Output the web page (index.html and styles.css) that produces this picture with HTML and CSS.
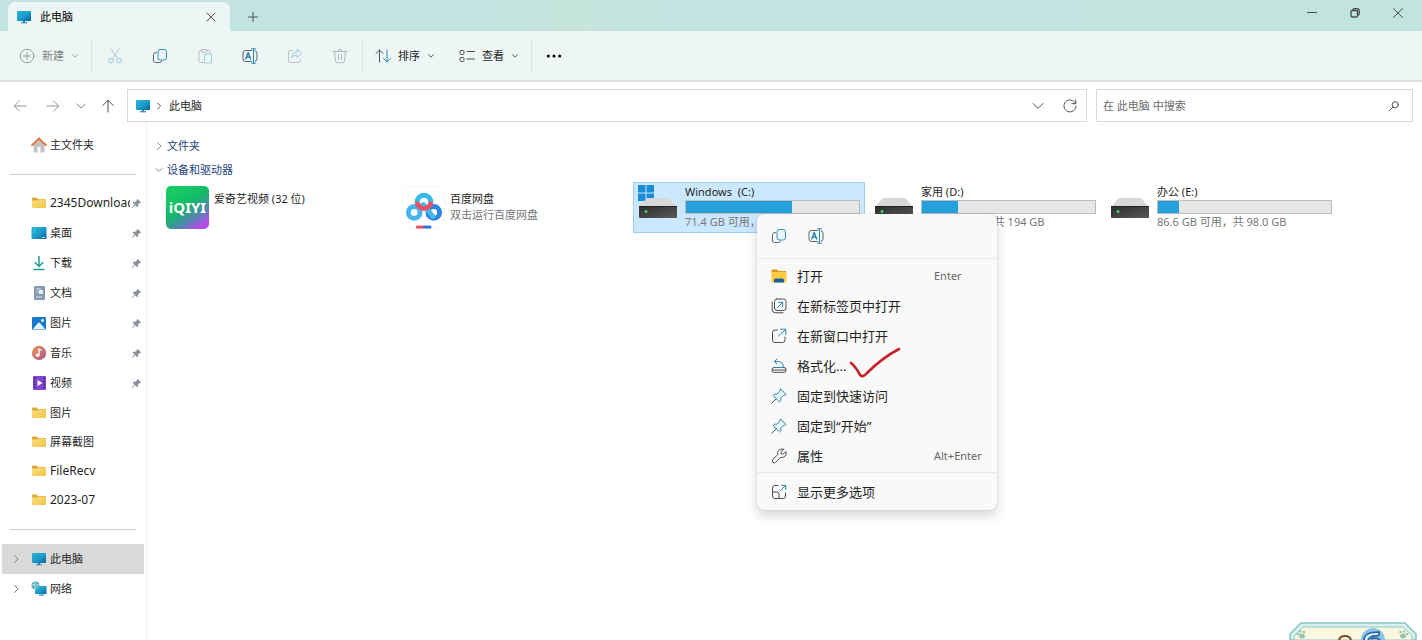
FILE: index.html
```html
<!DOCTYPE html>
<html lang="zh-CN">
<head>
  <meta charset="UTF-8" />
  <meta name="viewport" content="width=device-width, initial-scale=1.0"/>
  <title>此电脑</title>
  <link rel="stylesheet" href="styles.css">
</head>
<body>
  <!-- Shared icons -->
  <svg class="sprite" aria-hidden="true">
    <defs>
      <linearGradient id="screen" x1="0" y1="0" x2="1" y2="1"><stop offset="0" stop-color="#27b3cf"/><stop offset=".5" stop-color="#1c9fcd"/><stop offset="1" stop-color="#0f5ea0"/></linearGradient>
      <linearGradient id="gold" x1="0" y1="0" x2="1" y2="1"><stop offset="0" stop-color="#fbdf83"/><stop offset="1" stop-color="#f0c546"/></linearGradient>
      <linearGradient id="metal" x1="0" y1="0" x2="1" y2="1"><stop offset="0" stop-color="#2d2d2d"/><stop offset="1" stop-color="#5a5a5a"/></linearGradient>
      <linearGradient id="song" x1="0" y1="0" x2="1" y2="1"><stop offset="0" stop-color="#ee9a55"/><stop offset="1" stop-color="#b04f8c"/></linearGradient>
    </defs>
    <symbol id="pc" viewBox="0 0 16 16"><path d="M5 13h6v1.400H5z" fill="#4c9fbd"/><path d="M7 11.500h2v2H7z" fill="#2c7d9d"/><rect x="1" y="2" width="14" height="10" rx=".8" fill="url(#screen)"/></symbol>
    <symbol id="folder" viewBox="0 0 16 16"><path d="M1 3.500q0-1 1-1h3.500L7 4h7q1 0 1 1v2H1z" fill="#dfa93a"/><path d="M1 5.500h5.500L8 4.500h6q1 0 1 1V12q0 1-1 1H2q-1 0-1-1z" fill="url(#gold)"/></symbol>
    <symbol id="down" viewBox="0 0 10 10"><path d="M2 3.500l3 3 3-3"/></symbol>
    <symbol id="right" viewBox="0 0 10 10"><path d="M3.500 1.500L7 5 3.500 8.500"/></symbol>
    <symbol id="pin" viewBox="0 0 12 12"><path d="M7.300 1l3.700 3.700-.7.800-.8-.1-1.800 1.800.1 2-1 1-2.200-2.200L1.300 11l-.5-.5 3-3.300L1.700 5l1-1 2.100.2 1.700-1.700-.1-.8z" fill="#8b949e"/></symbol>
    <symbol id="copy" viewBox="0 0 16 16"><rect x="6" y="1.500" width="8.500" height="10.500" rx="2.200" stroke="#3c8db5" fill="#e8f6fc"/><path d="M4.500 4.500h-.7q-2 0-2.200 2l-.3 5.700q0 2.300 2.200 2.300h4q1.800 0 2.200-1.300" stroke="#58646c"/></symbol>
    <symbol id="rename" viewBox="0 0 16 16"><path d="M9.500 2.500h-6q-2.500 0-2.500 2.500v6q0 2.500 2.500 2.500h6M13 2.800q2 .3 2 2.200v6q0 1.900-2 2.200" stroke="#56636c"/><path d="M3.700 11l2.500-6.500L8.700 11M4.500 9h3.400" stroke="#277da8" stroke-width="1.300"/><path d="M9.500.8h4M11.500.8v14.400M9.500 15.200h4" stroke="#2b88b5"/></symbol>
    <symbol id="tack" viewBox="0 0 16 16"><path d="M9.800 1.300l4.900 4.900q-.2 1.200-1.200 1.200l-1.200.1-2.500 2.500.1 2.600-1.400 1.300-6.400-6.400 1.300-1.400 2.600.1 2.500-2.500.1-1.200q0-1 1.200-1.200z" stroke="#36809f" fill="#e5f7fc"/><path d="M5.200 10.800L.8 15.200" stroke="#40505a"/></symbol>
    <symbol id="disk" viewBox="0 0 40 22"><path d="M9 1h22l8 9H1z" fill="#d8d8da"/><rect x="1" y="9" width="38" height="12" rx=".8" fill="url(#metal)"/><path d="M1 9.500h38" stroke="#222"/><circle cx="8" cy="14.500" r="1.500" fill="#45d567"/></symbol>
  </svg>

  <header class="titlebar">
    <div class="tab">
      <svg class="icon"><use href="#pc"/></svg>
      <span class="tab-title">此电脑</span>
      <button class="tab-close" aria-label="关闭标签页"><svg class="line small" viewBox="0 0 10 10"><path d="M1 1l8 8M9 1L1 9"/></svg></button>
    </div>
    <button class="tab-add" aria-label="新标签页"><svg class="line small" viewBox="0 0 10 10"><path d="M5 .5v9M.5 5h9"/></svg></button>
    <div class="window-buttons">
      <button aria-label="最小化"><svg class="line small" viewBox="0 0 10 10"><path d="M.5 4.500h9"/></svg></button>
      <button aria-label="还原"><svg class="line small bold" viewBox="0 0 10 10"><rect x="1" y="2.500" width="6.500" height="6.500" rx="1.300"/><path d="M3 2.500V1.800Q3.300.8 4.300.8h3Q9.200.8 9.200 2.700v3q0 1.200-1.500 1.300"/></svg></button>
      <button aria-label="关闭"><svg class="line small" viewBox="0 0 10 10"><path d="M.5.5l9 9M9.500.5l-9 9"/></svg></button>
    </div>
  </header>

  <div class="toolbar">
    <button class="tool-text new" disabled>
      <svg class="line icon" viewBox="0 0 16 16"><circle cx="8" cy="8" r="6.800"/><path d="M8 4.800v6.400M4.800 8h6.400"/></svg>
      新建
      <svg class="line chev"><use href="#down"/></svg>
    </button>
    <div class="tool-group">
      <button class="tool" disabled aria-label="剪切"><svg class="line icon" viewBox="0 0 16 16"><path d="M4 1l6.500 9.800M12 1L5.500 10.800" stroke="#8d999e"/><circle cx="4" cy="12.500" r="2.400" stroke="#5baad0"/><circle cx="12" cy="12.500" r="2.400" stroke="#5baad0"/></svg></button>
      <button class="tool" aria-label="复制"><svg class="line icon"><use href="#copy"/></svg></button>
      <button class="tool" disabled aria-label="粘贴"><svg class="line icon" viewBox="0 0 16 16"><path d="M5 2.500H3q-1 0-1 1v10q0 1 1 1h4M10 2.500h2q1 0 1 1V5M5 1.500h5V4H5z" stroke="#8d999e"/><rect x="7.500" y="6" width="7" height="9" rx="1" stroke="#5baad0"/></svg></button>
      <button class="tool" aria-label="重命名"><svg class="line icon"><use href="#rename"/></svg></button>
      <button class="tool" disabled aria-label="共享"><svg class="line icon" viewBox="0 0 16 16"><path d="M6 2.500H4Q1.500 2.500 1.500 5v7q0 2.500 2.500 2.500h7q2.500 0 2.500-2.500v-1" stroke="#8d999e"/><path d="M10 1.500l5 4-5 4V7.300q-3.500-.3-5.500 2.800.3-5.600 5.500-6.300z" stroke="#5baad0" fill="#dff0f8"/></svg></button>
      <button class="tool" disabled aria-label="删除"><svg class="line icon" viewBox="0 0 16 16"><path d="M1 3.500h14M6 3.200q0-2 2-2t2 2M2.500 3.500l1 9.500q.2 1.800 1.800 1.800h5.400q1.600 0 1.800-1.800l1-9.500M6.500 6.500v5M9.500 6.500v5" stroke="#7d878b"/></svg></button>
    </div>
    <button class="tool-text">
      <svg class="line icon" viewBox="0 0 16 16"><path d="M1 5.500L4.500 2 8 5.500M4.500 2v12" stroke="#4b555b"/><path d="M8.500 10.500L12 14l3.500-3.500M12 14V2" stroke="#2b88b5"/></svg>
      排序
      <svg class="line chev"><use href="#down"/></svg>
    </button>
    <button class="tool-text view">
      <svg class="line icon" viewBox="0 0 16 16"><rect x="1" y="2.500" width="4" height="4" rx="1.200"/><rect x="1" y="9.500" width="4" height="4" rx="1.200"/><path d="M8 3.500h7.500M8 11h7.500"/></svg>
      查看
      <svg class="line chev"><use href="#down"/></svg>
    </button>
    <button class="tool more" aria-label="更多"><svg class="icon" viewBox="0 0 16 16"><circle cx="2.300" cy="8" r="1.500"/><circle cx="8" cy="8" r="1.500"/><circle cx="13.700" cy="8" r="1.500"/></svg></button>
  </div>

  <div class="addressbar">
    <div class="history">
      <button class="faded" aria-label="后退"><svg class="line arrow" viewBox="0 0 14 14"><path d="M13 7H1.500M6.500 1.800L1.300 7l5.200 5.200"/></svg></button>
      <button class="faded" aria-label="前进"><svg class="line arrow" viewBox="0 0 14 14"><path d="M1 7h11.500M7.500 1.800L12.700 7l-5.200 5.200"/></svg></button>
      <button class="recent" aria-label="最近位置"><svg class="line arrow"><use href="#down"/></svg></button>
      <button aria-label="上移"><svg class="line arrow" viewBox="0 0 14 14"><path d="M7 13V1.500M1.800 6.500L7 1.300l5.200 5.200"/></svg></button>
    </div>
    <div class="path">
      <svg class="icon"><use href="#pc"/></svg>
      <svg class="line crumb"><use href="#right"/></svg>
      <a href="#">此电脑</a>
      <button class="drop" aria-label="展开"><svg class="line icon"><use href="#down"/></svg></button>
      <button aria-label="刷新"><svg class="line arrow" viewBox="0 0 14 14"><path d="M12.500 4.500A6 6 0 1 0 13 7M12.800 1v3.700H9"/></svg></button>
    </div>
    <form class="search">
      <input type="text" aria-label="搜索" placeholder="在 此电脑 中搜索">
      <button type="button" aria-label="搜索"><svg class="line small" viewBox="0 0 10 10"><circle cx="6.300" cy="3.700" r="3.100"/><path d="M4.200 5.800L.5 9.500"/></svg></button>
    </form>
  </div>

  <div class="body">
    <nav class="sidebar">
      <a class="item home" href="#"><svg class="icon" viewBox="0 0 16 16"><path d="M2.500 7L8 2l5.500 5v8.500h-4V10h-3v5.500h-4z" fill="#c3c1c5"/><path d="M1 8.200L8 1.500l7 6.700" stroke="#dc7b3c" stroke-width="1.900" fill="none" stroke-linecap="round"/></svg>主文件夹</a>
      <hr>
      <div class="pinned">
        <a class="item" href="#"><svg class="icon"><use href="#folder"/></svg><span class="name latin">2345Download</span><svg class="pin"><use href="#pin"/></svg></a>
        <a class="item" href="#"><svg class="icon" viewBox="0 0 16 16"><rect x=".5" y="2" width="15" height="12" rx="1" fill="url(#screen)"/><path d="M3 4.500h1M3 7h1M11 12.500h3" stroke="#a6e8f5"/></svg><span class="name">桌面</span><svg class="pin"><use href="#pin"/></svg></a>
        <a class="item" href="#"><svg class="icon" viewBox="0 0 16 16"><path d="M8 1v10M3.800 7.200L8 11.400l4.200-4.200M2.500 14.500h11" stroke="#1f9e96" stroke-width="1.500" fill="none"/></svg><span class="name">下载</span><svg class="pin"><use href="#pin"/></svg></a>
        <a class="item" href="#"><svg class="icon" viewBox="0 0 16 16"><rect x="3" y="1" width="11" height="14" rx="1" fill="#8398b1"/><path d="M5 4h5M5 7h3M5 12h6" stroke="#dce6ee"/><rect x="8" y="5" width="4" height="4" fill="#e7eef4"/></svg><span class="name">文档</span><svg class="pin"><use href="#pin"/></svg></a>
        <a class="item" href="#"><svg class="icon" viewBox="0 0 16 16"><rect x="1" y="2" width="14" height="13" rx="1.200" fill="#1679ca"/><path d="M1.500 14.500L7 8q1-1 2 0l5.500 6.500z" fill="#e6f5ff"/><circle cx="11.500" cy="5.500" r="1.400" fill="#fff"/></svg><span class="name">图片</span><svg class="pin"><use href="#pin"/></svg></a>
        <a class="item" href="#"><svg class="icon" viewBox="0 0 16 16"><circle cx="8" cy="8" r="7.200" fill="url(#song)"/><path d="M8 10V4l2.500 1.300" stroke="#fff" stroke-width="1.300" fill="none"/><circle cx="6.600" cy="10.300" r="1.800" fill="#fff"/></svg><span class="name">音乐</span><svg class="pin"><use href="#pin"/></svg></a>
        <a class="item" href="#"><svg class="icon" viewBox="0 0 16 16"><rect x="2" y="1" width="13" height="14" rx="1" fill="#8246cd"/><path d="M3.800 2.500v11M13.200 2.500v11" stroke="#3d1c79" stroke-width="1.400" stroke-dasharray="1.500 1.500"/><path d="M6.500 5l5 3-5 3z" fill="#fff"/></svg><span class="name">视频</span><svg class="pin"><use href="#pin"/></svg></a>
      </div>
      <div class="folders">
        <a class="item" href="#"><svg class="icon"><use href="#folder"/></svg>图片</a>
        <a class="item" href="#"><svg class="icon"><use href="#folder"/></svg>屏幕截图</a>
        <a class="item latin" href="#"><svg class="icon"><use href="#folder"/></svg>FileRecv</a>
        <a class="item latin" href="#"><svg class="icon"><use href="#folder"/></svg>2023-07</a>
      </div>
      <hr>
      <div class="places">
        <a class="item active" href="#"><svg class="line expand"><use href="#right"/></svg><svg class="icon"><use href="#pc"/></svg>此电脑</a>
        <a class="item" href="#"><svg class="line expand"><use href="#right"/></svg><svg class="icon" viewBox="0 0 16 16"><path d="M8 13.500h5v1.200H8z" fill="#3389a8"/><rect x="4" y="5" width="11.500" height="8" rx=".6" fill="url(#screen)"/><circle cx="4.500" cy="4.500" r="4" fill="#5caec1"/><path d="M1 3.500q3 2 7 0M4.500.5q-2 4 0 8" stroke="#bfeaf0" fill="none" stroke-width=".8"/></svg>网络</a>
      </div>
    </nav>

    <main class="content">
      <h2 class="group"><svg class="line chev"><use href="#right"/></svg>文件夹</h2>
      <h2 class="group"><svg class="line chev"><use href="#down"/></svg>设备和驱动器</h2>

      <div class="tiles">
        <div class="tile">
          <div class="iqiyi">iQIYI</div>
          <div class="info app"><div>爱奇艺视频 (32 位)</div></div>
        </div>
        <div class="tile">
          <svg class="baidu-logo" viewBox="0 0 44 44">
            <rect x=".5" y=".5" width="43" height="43" rx="7" fill="#fff" stroke="#f6f6f6"/>
            <g fill="none" stroke-width="5">
              <circle cx="12.500" cy="27" r="6" stroke="#45b4ee"/>
              <circle cx="32.500" cy="27" r="6" stroke="#2f83e4"/>
              <path d="M16 22l6-3 11 14" stroke="#42b8ed" stroke-linejoin="round"/>
              <path d="M15.500 16.500a7 7 0 1 1 14 0" stroke="#36bcec"/>
              <path d="M15.500 16a7 7 0 0 0 14 0" stroke="#e65367"/>
            </g>
            <path d="M14.500 42h8" stroke="#ed4c5a" stroke-width="3"/><path d="M22 42h8" stroke="#2878dc" stroke-width="3"/>
          </svg>
          <div class="info app"><div>百度网盘</div><div class="sub">双击运行百度网盘</div></div>
        </div>
        <div class="tile selected">
          <div class="drive">
            <svg class="windows" viewBox="0 0 16 16"><path d="M0 0h7.500v7.500H0zM8.500 0H16v7.500H8.500zM0 8.500h7.500V16H0zM8.500 8.500H16V16H8.500z" fill="#168dd5"/></svg>
            <svg class="disk"><use href="#disk"/></svg>
          </div>
          <div class="info"><div>Windows&nbsp; (C:)</div><div class="bar"><div class="used" style="width: 61%"></div></div><div class="sub">71.4 GB 可用，共 182 GB</div></div>
        </div>
        <div class="tile">
          <div class="drive"><svg class="disk"><use href="#disk"/></svg></div>
          <div class="info"><div>家用 (D:)</div><div class="bar"><div class="used" style="width: 21%"></div></div><div class="sub">154 GB 可用，共 194 GB</div></div>
        </div>
        <div class="tile">
          <div class="drive"><svg class="disk"><use href="#disk"/></svg></div>
          <div class="info"><div>办公 (E:)</div><div class="bar"><div class="used" style="width: 12%"></div></div><div class="sub">86.6 GB 可用，共 98.0 GB</div></div>
        </div>
      </div>

      <!-- Right click menu -->
      <div class="menu">
        <div class="menu-top">
          <button aria-label="复制"><svg class="line icon"><use href="#copy"/></svg></button>
          <button aria-label="重命名"><svg class="line icon"><use href="#rename"/></svg></button>
        </div>
        <div class="menu-list">
          <button class="menu-item"><svg class="icon" viewBox="0 0 16 16"><path d="M.5 2.500q0-1 1-1H6L7.500 3H15v4H.5z" fill="#d99b1c"/><path d="M.5 4h15v9.500q0 1-1 1h-13q-1 0-1-1z" fill="#fccc43"/><path d="M3 14.500V12q0-1.500 1.500-1.500h7q1.500 0 1.500 1.500v2.500z" fill="#1c5d9f"/></svg>打开<kbd>Enter</kbd></button>
          <button class="menu-item"><svg class="line icon" viewBox="0 0 16 16"><rect x="3.500" y="1" width="11.500" height="11.500" rx="2.500"/><path d="M1.200 4v7.500q0 3.300 3.300 3.300H12"/><path d="M6.500 9.500l5-5M7.500 4.300h4.200v4.200" stroke="#2b88b5"/></svg>在新标签页中打开</button>
          <button class="menu-item"><svg class="line icon" viewBox="0 0 16 16"><path d="M6.500 2H4Q1.500 2 1.500 4.500V12q0 2.500 2.500 2.500h7.500Q14 14.500 14 12V9"/><path d="M7.500 8L14.700 1.300M9.500 1.200h5.300v5.300" stroke="#2b88b5"/></svg>在新窗口中打开</button>
          <button class="menu-item format"><svg class="line icon" viewBox="0 0 16 16"><path d="M3.500 9.500H3q-2 0-2 2v1q0 1.800 2 1.800h10q2 0 2-1.800v-1q0-2-2-2h-.5M1.500 12h13"/><path d="M4 9.500h8q1-5.500-4.500-6H4M6 1L3.500 3.500 6 6" stroke="#2b88b5"/></svg>格式化...
            <svg class="mark" viewBox="0 0 54 34"><path d="M3 17q5 4 9 12 3 3 7-2Q34 12 51 3" fill="none" stroke="#c42128" stroke-width="2.600" stroke-linecap="round"/></svg>
          </button>
          <button class="menu-item"><svg class="line icon"><use href="#tack"/></svg>固定到快速访问</button>
          <button class="menu-item"><svg class="line icon"><use href="#tack"/></svg>固定到“开始”</button>
          <button class="menu-item"><svg class="line icon" viewBox="0 0 16 16"><path d="M12.700 1.200L9.900 4l.3 1.900 1.900.3 2.800-2.800q1 3-1 5-1.900 1.700-4.300.9l-5 5q-1.300 1-2.700 0-1.300-1.400 0-2.900l4.900-4.900q-.8-2.600 1-4.300 2-1.900 4.900-1z"/></svg>属性<kbd>Alt+Enter</kbd></button>
        </div>
        <button class="menu-item last"><svg class="line icon" viewBox="0 0 16 16"><path d="M7 1.500H4Q1.500 1.500 1.500 4v8q0 2.500 2.500 2.500h8q2.500 0 2.500-2.500V9M1.500 8H6q2 0 2 2v4.500"/><path d="M9 7l5.500-5.500M10.500 1.300h4.200v4.200" stroke="#2b88b5"/></svg>显示更多选项</button>
      </div>
    </main>
  </div>

  <!-- Input method skin, peeks in from below -->
  <svg class="sticker" viewBox="0 0 128 18">
    <path d="M1 18v-6L12 1h104l11 11v6z" fill="#d7f0ed" stroke="#87c4c3" stroke-width="1.500"/>
    <path d="M5 18v-4l9-9h100l9 9v4z" fill="#fcf8df" stroke="#8fcac7"/>
    <g fill="#9bc4b3"><ellipse cx="13" cy="14" rx="3" ry="2.500"/><circle cx="9" cy="12" r="1.300"/><circle cx="11.500" cy="9.500" r="1.300"/><circle cx="15" cy="10" r="1.300"/><ellipse cx="114" cy="14" rx="3" ry="2.500"/><circle cx="111.500" cy="10" r="1.300"/><circle cx="115" cy="9.500" r="1.300"/><circle cx="118" cy="12" r="1.300"/></g>
    <path d="M50 18q1-4 6-4t6 4" fill="none" stroke="#7c4b2a" stroke-width="2"/>
    <circle cx="84" cy="18" r="12" fill="#8ac5e8"/>
    <path d="M75 18q0-8 15-8 1 4-3 4-5-1-8 4M82 17q5-2 9 1" fill="#d8f0fa" stroke="#2a629c" stroke-width="1.700"/>
  </svg>
</body>
</html>
```
FILE: styles.css
```css
:root {
  --text: #1f1f1f;
  --muted: #767676;
  --line: #d9d9d9;
  --toolbar: #edf6f5;
  --blue: #26a0da;
}

* {
  box-sizing: border-box;
}

body {
  margin: 0;
  min-height: 100vh;
  display: flex;
  flex-direction: column;
  overflow: hidden;
  background: #fff;
  color: var(--text);
  font-family: "Noto Sans", "Noto Sans CJK SC", sans-serif;
  font-size: 11px;
  line-height: 16px;
}

button {
  display: flex;
  align-items: center;
  justify-content: center;
  padding: 0;
  border: none;
  background: none;
  color: inherit;
  font: inherit;
}

a {
  color: inherit;
  text-decoration: none;
}

svg {
  flex: none;
}

.sprite {
  position: absolute;
  width: 0;
  height: 0;
}

#down path,
#right path {
  vector-effect: non-scaling-stroke;
}

.icon {
  width: 16px;
  height: 16px;
}

.small {
  width: 10px;
  height: 10px;
}

.arrow {
  width: 14px;
  height: 14px;
}

.chev {
  width: 10px;
  height: 10px;
}

.line {
  fill: none;
  stroke: #4b4f52;
  stroke-width: 1;
  stroke-linecap: round;
  stroke-linejoin: round;
}

.bold {
  stroke-width: 1.4;
}

.latin {
  font-size: 12px;
}

/* title bar */
.titlebar {
  display: flex;
  height: 31px;
  padding: 2px 3px 0 8px;
  background: linear-gradient(to right, #c3e3e1, #c3e4e1 34%, #c5e5dc 40%, #c3e4e1 48%, #c2e4df);
}

.tab {
  display: flex;
  align-items: center;
  width: 222px;
  padding: 0 14px 0 8px;
  border-radius: 7px 7px 0 0;
  background: var(--toolbar);
}

.tab-title {
  flex: 1;
  padding-left: 8px;
  color: #000;
}

.tab-add {
  width: 46px;
}

.window-buttons {
  display: flex;
  height: 22px;
  margin-left: auto;
}

.window-buttons button {
  width: 43px;
}

/* toolbar */
.toolbar {
  display: flex;
  align-items: center;
  height: 51px;
  border-bottom: 2px solid #d8e1e0;
  background: var(--toolbar);
}

.tool {
  width: 45px;
  height: 32px;
}

.tool:disabled,
.new:disabled {
  opacity: 0.55;
}

.tool-text {
  gap: 7px;
  padding: 0 12px;
}

.tool-text .chev {
  width: 8px;
}

.tool-text.new {
  padding: 0 12px 0 19px;
}

.tool-group {
  display: flex;
  border: solid #dbe5e4;
  border-width: 0 1px;
}

.more {
  border-left: 1px solid #dbe5e4;
}

/* address bar */
.addressbar {
  display: flex;
  gap: 9px;
  padding: 7px 9px 0 0;
}

.history {
  display: flex;
  align-items: center;
  gap: 16px;
  padding: 0 3px 0 13px;
}

.history .faded {
  opacity: 0.6;
  margin-right: 3px;
}

.history .recent {
  margin: 0 -3px 0 -5px;
  opacity: 0.7;
}

.path,
.search {
  display: flex;
  align-items: center;
  height: 33px;
  border: 1px solid var(--line);
}

.path {
  flex: 1;
  padding: 0 9px 0 7px;
}

.crumb {
  width: 8px;
  height: 8px;
  margin: 0 6px 0 4px;
}

.drop {
  margin: 0 17px 0 auto;
}

.search {
  width: 317px;
  padding: 0 13px 0 6px;
}

.search input {
  flex: 1;
  min-width: 0;
  padding: 0;
  border: none;
  outline: none;
  background: none;
  font: inherit;
}

.search input::placeholder {
  color: #6b6b6b;
}

/* sidebar */
.body {
  display: flex;
  flex: 1;
}

.sidebar {
  width: 147px;
  padding-top: 8px;
  border-right: 1px solid #f3f3f3;
}

.sidebar hr {
  height: 1px;
  margin: 15px 10px 13px;
  border: none;
  background: #cfcfcf;
}

.item {
  display: flex;
  align-items: center;
  gap: 3px;
  height: 29px;
  padding-left: 31px;
  white-space: nowrap;
}

.pinned .item {
  height: 30px;
  padding-right: 4px;
}

.name {
  flex: 1;
  overflow: hidden;
}

.pin {
  width: 11px;
  height: 11px;
  margin-left: -2px;
}

.places {
  padding: 1px 2px 0;
}

.places .item {
  height: 30px;
  padding-left: 9px;
}

.places .active {
  background: #d9d9d9;
}

.expand {
  width: 10px;
  height: 10px;
  margin-right: 7px;
  stroke: #808080;
}

/* content */
.content {
  position: relative;
  flex: 1;
  padding: 12px 0 0 7px;
}

.group {
  display: flex;
  align-items: center;
  gap: 3px;
  height: 24px;
  margin: 0;
  color: #26437c;
  font-size: 11px;
  font-weight: normal;
}

.group .chev {
  stroke: #8a8a8a;
}

.tiles {
  display: grid;
  grid-template-columns: repeat(auto-fill, 232px);
  gap: 4px;
  padding-left: 7px;
}

.tile {
  display: flex;
  gap: 5px;
  height: 51px;
  padding: 0 4px;
  border: 1px solid transparent;
  white-space: nowrap;
}

.selected {
  border-color: #99d1f5;
  background: #cce8ff;
}

.info {
  flex: 1;
  padding-top: 1px;
}

.app {
  padding-top: 8px;
}

.sub {
  color: var(--muted);
}

.bar {
  height: 14px;
  border: 1px solid #bcbcbc;
  background: #e6e6e6;
}

.used {
  height: 100%;
  background: var(--blue);
}

.drive {
  display: flex;
  flex-direction: column;
  justify-content: flex-end;
  width: 42px;
  padding-bottom: 13px;
}

.disk {
  width: 40px;
  height: 22px;
}

.windows {
  width: 16px;
  height: 16px;
  margin-bottom: -4px;
}

.iqiyi {
  width: 43px;
  height: 43px;
  margin-top: 3px;
  border-radius: 5px;
  background: linear-gradient(145deg, #18cc64 15%, #12b966 45%, #4b8aa9 68%, #b34de8 88%);
  color: #fff;
  font-size: 15px;
  font-weight: bold;
  line-height: 43px;
  text-align: center;
}

.baidu-logo {
  width: 43px;
  height: 43px;
  margin-top: 3px;
}

/* right click menu */
.menu {
  position: absolute;
  top: 92px;
  left: 610px;
  width: 240px;
  border-radius: 7px;
  background: #f9f9f9;
  box-shadow: 0 6px 12px rgba(0, 0, 0, 0.16), 0 0 1px rgba(0, 0, 0, 0.3);
}

.menu-top {
  display: flex;
  gap: 21px;
  height: 45px;
  padding-left: 14px;
  border-bottom: 1px solid #e8e8e8;
}

.menu-list {
  padding: 2px 0 1px;
  border-bottom: 1px solid #e8e8e8;
}

.menu-item {
  position: relative;
  justify-content: flex-start;
  gap: 10px;
  width: 100%;
  height: 30px;
  padding-left: 14px;
  font-size: 13px;
}

.menu-item kbd {
  width: 63px;
  margin-left: auto;
  color: #666;
  font-family: inherit;
  font-size: 11px;
  text-align: left;
}

.last {
  margin: 4px 0 3px;
}

.mark {
  position: absolute;
  top: -5px;
  left: 91px;
  width: 54px;
  height: 34px;
}

.sticker {
  position: fixed;
  right: 5px;
  bottom: 0;
  width: 128px;
  height: 18px;
}
```
